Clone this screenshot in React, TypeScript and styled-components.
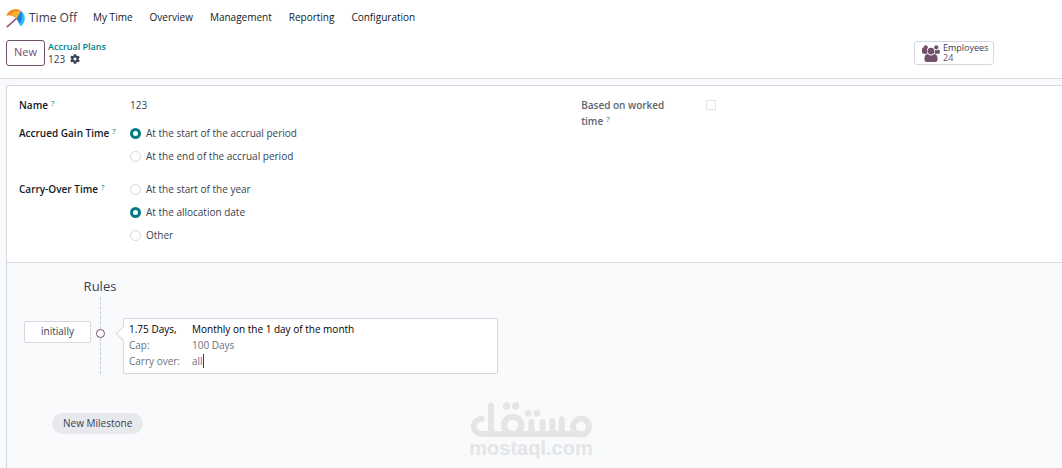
import React, { useState } from "react";
import styled, { createGlobalStyle } from "styled-components";
import { FaCog } from "react-icons/fa";

const c = {
  text: "#374151",
  strong: "#111827",
  muted: "#6b717c",
  line: "#d5d8de",
  canvas: "#f9fafb",
  teal: "#017e84",
  plum: "#71506b",
};

const GlobalStyle = createGlobalStyle`
  *, *::before, *::after { box-sizing: border-box; }
  body {
    margin: 0;
    background: ${c.canvas};
    color: ${c.text};
    font: 10px/16px "Open Sans", "Noto Sans", sans-serif;
  }
  button, input { font: inherit; color: inherit; }
`;

const Page = styled.div`
  position: relative;
  display: flex;
  flex-direction: column;
  min-height: 100vh;
  overflow: hidden;
`;

const NavBar = styled.nav`
  display: flex;
  align-items: center;
  gap: 16px;
  height: 34px;
  padding: 0 6px;
  background: #fff;
`;

const Brand = styled.a`
  display: flex;
  align-items: center;
  gap: 4px;
  padding-top: 2px;
  color: ${c.text};
  font-size: 12px;
  text-decoration: none;
`;

const NavLinks = styled.div`
  display: flex;
  gap: 17px;
`;

const NavLink = styled.a`
  color: ${c.strong};
  text-decoration: none;
`;

const ControlPanel = styled.header`
  display: flex;
  align-items: center;
  justify-content: space-between;
  height: 45px;
  padding: 0 68px 6px 6px;
  background: #fff;
  border-bottom: 1px solid ${c.line};
`;

const PanelStart = styled.div`
  display: flex;
  align-items: center;
  gap: 3px;
`;

const NewButton = styled.button`
  width: 39px;
  height: 26px;
  padding: 0 0 2px;
  background: #fff;
  border: 1px solid ${c.plum};
  border-radius: 3px;
  color: ${c.plum};
  font-size: 11px;
`;

const Crumbs = styled.div`
  display: flex;
  flex-direction: column;
  line-height: 12px;
`;

const CrumbLink = styled.a`
  color: ${c.teal};
  font-size: 9px;
  font-weight: 600;
  text-decoration: none;
`;

const CrumbCurrent = styled.div`
  display: flex;
  align-items: center;
  gap: 5px;
`;

const GearButton = styled.button`
  display: flex;
  padding: 0;
  background: none;
  border: 0;
`;

const StatButton = styled.button`
  display: flex;
  align-items: center;
  gap: 3px;
  width: 80px;
  height: 24px;
  padding: 0 0 0 7px;
  background: #fff;
  border: 1px solid ${c.line};
  border-radius: 3px;
  text-align: left;
`;

const StatText = styled.span`
  display: flex;
  flex-direction: column;
  color: ${c.text};
  font-size: 9px;
  line-height: 10px;
`;

const StatValue = styled.span`
  color: ${c.plum};
`;

const Sheet = styled.main`
  display: flex;
  flex: 1;
  flex-direction: column;
  margin: 6px 0 0 6px;
  border: solid ${c.line};
  border-width: 1px 0 0 1px;
  border-top-left-radius: 3px;
`;

const Form = styled.form`
  display: grid;
  grid-template-columns: 54fr 46fr;
  padding: 11px 2px 19px 12px;
  background: #fff;
  border-bottom: 1px solid ${c.line};
  border-top-left-radius: 3px;
`;

const Group = styled.div`
  display: flex;
  flex-direction: column;
`;

const Field = styled.div<{ $gap?: number }>`
  display: grid;
  grid-template-columns: 111px 1fr;
  margin: 0 0 ${(p) => p.$gap ?? 0}px;
  padding: 0;
`;

const FieldLabel = styled.label<{ $muted?: boolean }>`
  color: ${(p) => (p.$muted ? "#5d6370" : c.strong)};
  font-weight: 600;
`;

const CheckField = styled.div`
  display: grid;
  grid-template-columns: 90px 1fr;
  column-gap: 35px;
`;

const Hint = styled.sup`
  margin-left: 3px;
  color: ${c.teal};
  font-size: 8px;
  font-weight: 400;
  line-height: 0;
  vertical-align: 3px;
`;

const TextInput = styled.input`
  width: 100%;
  height: 16px;
  padding: 0;
  background: transparent;
  border: 0;
  outline: 0;
`;

const Options = styled.div`
  display: flex;
  flex-direction: column;
  gap: 7px;
`;

const Option = styled.label`
  display: flex;
  align-items: center;
  gap: 5px;
`;

const Radio = styled.input`
  appearance: none;
  width: 11px;
  height: 11px;
  margin: 0;
  background: #fff;
  border: 1px solid ${c.line};
  border-radius: 50%;

  &:checked {
    border: 3px solid ${c.teal};
  }
`;

const Checkbox = styled.input`
  appearance: none;
  width: 10px;
  height: 10px;
  margin: 3px 0 0;
  background: #fff;
  border: 1px solid #e2e4e8;
`;

const Rules = styled.section`
  padding: 13px 17px 34px;
`;

const RulesTitle = styled.h2`
  width: 152px;
  margin: 0;
  font-size: 13px;
  font-weight: 400;
  line-height: 21px;
  text-align: center;
`;

const Milestone = styled.div`
  display: flex;
  align-items: flex-start;
`;

const Start = styled.div`
  width: 67px;
  height: 22px;
  margin-top: 24px;
  background: #fff;
  border: 1px solid ${c.line};
  border-radius: 2px;
  line-height: 19px;
  text-align: center;
`;

const Track = styled.div`
  display: flex;
  flex-direction: column;
  align-items: center;
  align-self: stretch;
  width: 19px;
`;

const Dash = styled.span<{ $length?: number }>`
  flex: ${(p) => (p.$length ? `0 0 ${p.$length}px` : "1")};
  border-left: 1px dashed #c9ccd2;
`;

const Dot = styled.span`
  width: 9px;
  height: 9px;
  background: #fff;
  border: 1px solid ${c.plum};
  border-radius: 50%;
`;

const Card = styled.div`
  position: relative;
  display: grid;
  grid-template-columns: 63px 1fr;
  width: 375px;
  margin: 21px 0 0 13px;
  padding: 2px 5px 4px;
  background: #fff;
  border: 1px solid ${c.line};
  border-radius: 2px;
  color: ${c.muted};

  &::before {
    content: "";
    position: absolute;
    top: 9px;
    left: -6px;
    width: 11px;
    height: 11px;
    background: #fff;
    border: solid ${c.line};
    border-width: 0 0 1px 1px;
    transform: rotate(45deg);
  }
`;

const CardCell = styled.span<{ $strong?: boolean }>`
  position: relative;
  display: flex;
  align-items: center;
  color: ${(p) => (p.$strong ? "#000" : "inherit")};
`;

const Caret = styled.span`
  width: 1px;
  height: 14px;
  background: ${c.text};
`;

const MilestoneButton = styled.button`
  height: 21px;
  margin: 39px 0 0 28px;
  padding: 0 11px;
  background: #e7e9ed;
  border: 0;
  border-radius: 11px;
  font-weight: 500;
  line-height: 19px;
`;

const Watermark = styled.div`
  position: absolute;
  bottom: 10px;
  left: 50%;
  display: flex;
  flex-direction: column;
  align-items: center;
  color: #e3e5e7;
  font: bold 20px/20px "Liberation Sans", sans-serif;
  transform: translateX(-50%);
  pointer-events: none;
`;

const UmbrellaLogo = () => (
  <svg width="19" height="19" viewBox="0 0 57 57" aria-hidden="true">
    <path d="M33 27 4 53" stroke="#985184" strokeWidth="5" strokeLinecap="round" />
    <path d="M1 20C5 8 18 0 31 1c6 0 10 2 14 5L32 29C22 20 12 16 1 20z" fill="#f78613" />
    <path d="M13 17C20 8 32 3 45 6L32 29C26 23 20 19 13 17z" fill="#fbb130" />
    <path d="M45 6c11 8 14 22 9 34-3 6-6 9-11 12L32 29z" fill="#2ebcfa" />
    <path d="M45 6c5 12 4 25-3 38L32 29z" fill="#1a7fe0" />
  </svg>
);

const UsersIcon = () => (
  <svg width="18" height="17" viewBox="0 0 1920 1792" fill={c.plum} aria-hidden="true">
    <path d="M593 640q-162 5-265 128h-134q-82 0-138-40.500t-56-118.500q0-353 124-353 6 0 43.500 21t97.500 42.500 119 21.500q67 0 133-23-5 37-5 66 0 139 81 256zM1664 1533q0 120-73 189.500t-194 69.500h-874q-121 0-194-69.500t-73-189.500q0-53 3.500-103.500t14-109 26.500-108.500 43-97.500 62-81 85.500-53.500 111.500-20q10 0 43 21.500t73 48 107 48 135 21.500 135-21.500 107-48 73-48 43-21.500q61 0 111.500 20t85.500 53.500 62 81 43 97.500 26.500 108.500 14 109 3.500 103.500z" transform="translate(0 0)" />
    <path d="M0 800q0-320 150-320 90 70 234 70 60 0 133-23-5 180 76 293-60 60-90 90H130q-130 0-130-110zM1920 800q0-320-150-320-90 70-234 70-60 0-133-23 5 180-76 293 60 60 90 90h373q130 0 130-110z" />
    <circle cx="400" cy="240" r="220" />
    <circle cx="1520" cy="240" r="220" />
    <circle cx="960" cy="640" r="360" />
  </svg>
);

const MostaqlLogo = () => (
  <svg width="122" height="36" viewBox="60 38 366 108" role="img" aria-label="Mostaql">
    <g fill="none" stroke="currentColor" strokeWidth="18" strokeLinecap="round" strokeLinejoin="round">
      <path d="M94 88C62 92 62 134 98 134H392" />
      <path d="M122 49V134" />
      <circle cx="187" cy="108" r="26" />
      <path d="M243 98V134M277 98V134M306 95V134M334 90V134" />
      <circle cx="392" cy="112" r="24" />
    </g>
    <g fill="currentColor">
      <circle cx="169" cy="50" r="11" />
      <circle cx="196" cy="50" r="11" />
      <circle cx="234" cy="72" r="10" />
      <circle cx="260" cy="72" r="10" />
    </g>
  </svg>
);

type ChoiceProps = { label: string; name: string; options: string[]; initial: string; gap?: number };

function ChoiceField({ label, name, options, initial, gap }: ChoiceProps) {
  const [value, setValue] = useState(initial);
  return (
    <Field $gap={gap} role="radiogroup" aria-labelledby={`${name}-label`}>
      <FieldLabel as="span" id={`${name}-label`}>
        {label}
        <Hint>?</Hint>
      </FieldLabel>
      <Options>
        {options.map((option) => (
          <Option key={option}>
            <Radio type="radio" name={name} checked={value === option} onChange={() => setValue(option)} />
            {option}
          </Option>
        ))}
      </Options>
    </Field>
  );
}

export default function App() {
  return (
    <Page>
      <GlobalStyle />
      <NavBar>
        <Brand href="#">
          <UmbrellaLogo />
          Time Off
        </Brand>
        <NavLinks>
          {["My Time", "Overview", "Management", "Reporting", "Configuration"].map((item) => (
            <NavLink href="#" key={item}>{item}</NavLink>
          ))}
        </NavLinks>
      </NavBar>
      <ControlPanel>
        <PanelStart>
          <NewButton type="button">New</NewButton>
          <Crumbs>
            <CrumbLink href="#">Accrual Plans</CrumbLink>
            <CrumbCurrent>
              123
              <GearButton type="button" aria-label="Actions">
                <FaCog size={10} />
              </GearButton>
            </CrumbCurrent>
          </Crumbs>
        </PanelStart>
        <StatButton type="button">
          <UsersIcon />
          <StatText>
            Employees
            <StatValue>24</StatValue>
          </StatText>
        </StatButton>
      </ControlPanel>
      <Sheet>
        <Form>
          <Group>
            <Field $gap={12}>
              <FieldLabel htmlFor="plan-name">
                Name
                <Hint>?</Hint>
              </FieldLabel>
              <TextInput id="plan-name" defaultValue="123" />
            </Field>
            <ChoiceField
              label="Accrued Gain Time"
              name="gain-time"
              options={["At the start of the accrual period", "At the end of the accrual period"]}
              initial="At the start of the accrual period"
              gap={17}
            />
            <ChoiceField
              label="Carry-Over Time"
              name="carry-over"
              options={["At the start of the year", "At the allocation date", "Other"]}
              initial="At the allocation date"
            />
          </Group>
          <Group>
            <CheckField>
              <FieldLabel htmlFor="worked-time" $muted>
                Based on worked time
                <Hint>?</Hint>
              </FieldLabel>
              <Checkbox id="worked-time" type="checkbox" />
            </CheckField>
          </Group>
        </Form>
        <Rules>
          <RulesTitle>Rules</RulesTitle>
          <Milestone>
            <Start>initially</Start>
            <Track>
              <Dash $length={32} />
              <Dot />
              <Dash />
            </Track>
            <Card>
              <CardCell $strong>1.75 Days,</CardCell>
              <CardCell $strong>Monthly on the 1 day of the month</CardCell>
              <CardCell>Cap:</CardCell>
              <CardCell>100 Days</CardCell>
              <CardCell>Carry over:</CardCell>
              <CardCell>
                all
                <Caret />
              </CardCell>
            </Card>
          </Milestone>
          <MilestoneButton type="button">New Milestone</MilestoneButton>
        </Rules>
      </Sheet>
      <Watermark>
        <MostaqlLogo />
        mostaql.com
      </Watermark>
    </Page>
  );
}
